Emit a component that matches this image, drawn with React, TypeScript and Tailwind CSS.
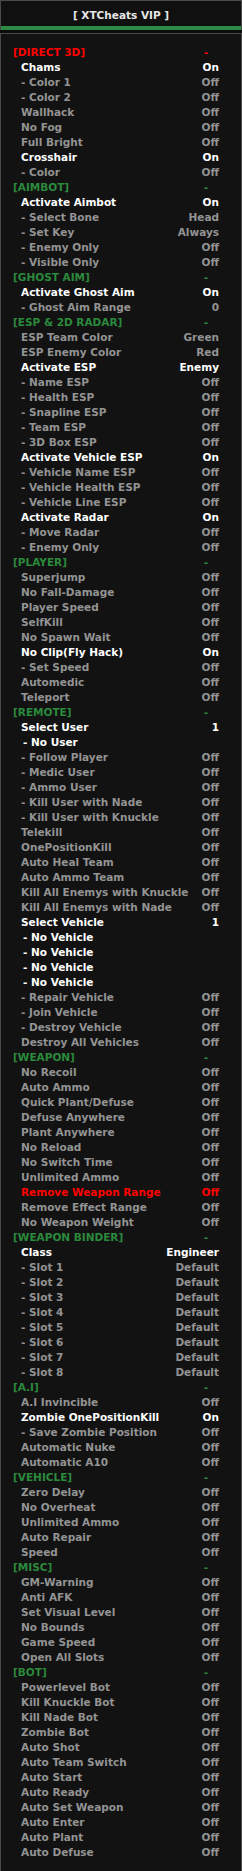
import React from "react";

type Row =
  | { kind: "section"; label: string; red?: boolean }
  | { kind: "item"; label: string; value?: string; tone?: "on" | "off" | "red"; indent?: boolean };

const S = (label: string, red?: boolean): Row => ({ kind: "section", label, red });
const off = (label: string, value = "Off"): Row => ({ kind: "item", label, value, tone: "off" });
const on = (label: string, value = "On"): Row => ({ kind: "item", label, value, tone: "on" });
const sub = (label: string): Row => ({ kind: "item", label, tone: "on", indent: true });

const ROWS: Row[] = [
  S("[DIRECT 3D]", true),
  on("Chams"),
  off("- Color 1"),
  off("- Color 2"),
  off("Wallhack"),
  off("No Fog"),
  off("Full Bright"),
  on("Crosshair"),
  off("- Color"),
  S("[AIMBOT]"),
  on("Activate Aimbot"),
  off("- Select Bone", "Head"),
  off("- Set Key", "Always"),
  off("- Enemy Only"),
  off("- Visible Only"),
  S("[GHOST AIM]"),
  on("Activate Ghost Aim"),
  off("- Ghost Aim Range", "0"),
  S("[ESP & 2D RADAR]"),
  off("ESP Team Color", "Green"),
  off("ESP Enemy Color", "Red"),
  on("Activate ESP", "Enemy"),
  off("- Name ESP"),
  off("- Health ESP"),
  off("- Snapline ESP"),
  off("- Team ESP"),
  off("- 3D Box ESP"),
  on("Activate Vehicle ESP"),
  off("- Vehicle Name ESP"),
  off("- Vehicle Health ESP"),
  off("- Vehicle Line ESP"),
  on("Activate Radar"),
  off("- Move Radar"),
  off("- Enemy Only"),
  S("[PLAYER]"),
  off("Superjump"),
  off("No Fall-Damage"),
  off("Player Speed"),
  off("SelfKill"),
  off("No Spawn Wait"),
  on("No Clip(Fly Hack)"),
  off("- Set Speed"),
  off("Automedic"),
  off("Teleport"),
  S("[REMOTE]"),
  on("Select User", "1"),
  sub("- No User"),
  off("- Follow Player"),
  off("- Medic User"),
  off("- Ammo User"),
  off("- Kill User with Nade"),
  off("- Kill User with Knuckle"),
  off("Telekill"),
  off("OnePositionKill"),
  off("Auto Heal Team"),
  off("Auto Ammo Team"),
  off("Kill All Enemys with Knuckle"),
  off("Kill All Enemys with Nade"),
  on("Select Vehicle", "1"),
  sub("- No Vehicle"),
  sub("- No Vehicle"),
  sub("- No Vehicle"),
  sub("- No Vehicle"),
  off("- Repair Vehicle"),
  off("- Join Vehicle"),
  off("- Destroy Vehicle"),
  off("Destroy All Vehicles"),
  S("[WEAPON]"),
  off("No Recoil"),
  off("Auto Ammo"),
  off("Quick Plant/Defuse"),
  off("Defuse Anywhere"),
  off("Plant Anywhere"),
  off("No Reload"),
  off("No Switch Time"),
  off("Unlimited Ammo"),
  { kind: "item", label: "Remove Weapon Range", value: "Off", tone: "red" },
  off("Remove Effect Range"),
  off("No Weapon Weight"),
  S("[WEAPON BINDER]"),
  on("Class", "Engineer"),
  off("- Slot 1", "Default"),
  off("- Slot 2", "Default"),
  off("- Slot 3", "Default"),
  off("- Slot 4", "Default"),
  off("- Slot 5", "Default"),
  off("- Slot 6", "Default"),
  off("- Slot 7", "Default"),
  off("- Slot 8", "Default"),
  S("[A.I]"),
  off("A.I Invincible"),
  on("Zombie OnePositionKill"),
  off("- Save Zombie Position"),
  off("Automatic Nuke"),
  off("Automatic A10"),
  S("[VEHICLE]"),
  off("Zero Delay"),
  off("No Overheat"),
  off("Unlimited Ammo"),
  off("Auto Repair"),
  off("Speed"),
  S("[MISC]"),
  off("GM-Warning"),
  off("Anti AFK"),
  off("Set Visual Level"),
  off("No Bounds"),
  off("Game Speed"),
  off("Open All Slots"),
  S("[BOT]"),
  off("Powerlevel Bot"),
  off("Kill Knuckle Bot"),
  off("Kill Nade Bot"),
  off("Zombie Bot"),
  off("Auto Shot"),
  off("Auto Team Switch"),
  off("Auto Start"),
  off("Auto Ready"),
  off("Auto Set Weapon"),
  off("Auto Enter"),
  off("Auto Plant"),
  off("Auto Defuse"),
];

const toneClass = {
  on: "text-white",
  off: "text-[#939393]",
  red: "text-[#ff0000]",
};

function MenuRow({ row }: { row: Row }) {
  if (row.kind === "section") {
    const color = row.red ? "text-[#ff0000]" : "text-[#2b8a3c]";
    return (
      <div className={`flex h-[15px] items-center justify-between pl-[12px] pr-[33px] ${color}`}>
        <span>{row.label}</span>
        <span>-</span>
      </div>
    );
  }
  const color = toneClass[row.tone ?? "off"];
  return (
    <div
      className={`flex h-[15px] items-center justify-between pr-[22px] ${row.indent ? "pl-[22px]" : "pl-[20px]"} ${color}`}
    >
      <span className="whitespace-nowrap">{row.label}</span>
      {row.value && <span className="whitespace-nowrap">{row.value}</span>}
    </div>
  );
}

export default function App() {
  return (
    <div
      className="h-[1871px] w-[242px] bg-[#0c0c0c] text-[10.5px] font-bold leading-none"
      style={{ fontFamily: '"DejaVu Sans", Verdana, sans-serif' }}
    >
      <div className="flex h-[30px] flex-col border-x border-t border-[#4a4a4a] bg-[#101010]">
        <div className="flex flex-1 items-center justify-center pt-[3px] text-[10.5px] text-[#e6e6e6]">
          [ XTCheats VIP ]
        </div>
        <div className="h-[4px] bg-[#2e8b45]" />
      </div>
      <div className="mt-[3px] h-[1838px] border-x border-t border-[#4a4a4a] bg-[#121212] pt-[11px]">
        {ROWS.map((row, i) => (
          <MenuRow key={i} row={row} />
        ))}
      </div>
    </div>
  );
}
